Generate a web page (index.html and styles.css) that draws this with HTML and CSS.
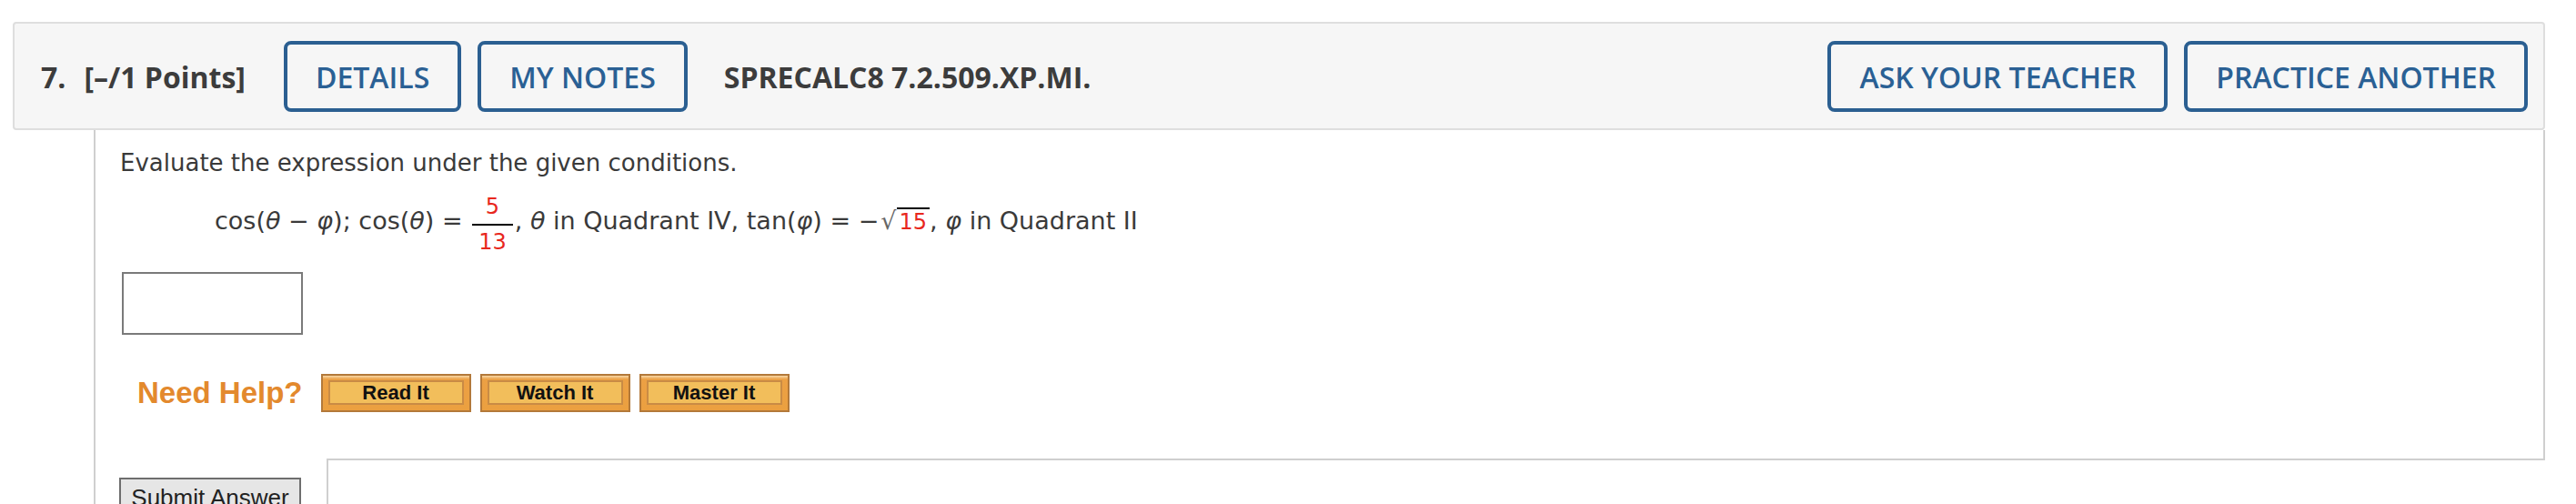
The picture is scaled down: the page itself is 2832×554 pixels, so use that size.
FILE: index.html
```html
<!doctype html>
<html lang="en">
	<head>
		<meta charset="UTF-8" />
		<title>Question 7</title>
		<link rel="stylesheet" href="styles.css">
	</head>
	<body>
		<div class="qhead">
			<span class="qnum">7.</span>
			<span class="points">[&ndash;/1 Points]</span>
			<a class="btn first">DETAILS</a>
			<a class="btn">MY NOTES</a>
			<span class="qid">SPRECALC8 7.2.509.XP.MI.</span>
			<div class="actions">
				<a class="btn">ASK YOUR TEACHER</a>
				<a class="btn">PRACTICE ANOTHER</a>
			</div>
		</div>

		<div class="question">
			<div class="qbody">
				<p class="prompt">Evaluate the expression under the given conditions.</p>
				<p class="math">cos(<i>&theta;</i> &minus; <i>&#966;</i>); cos(<i>&theta;</i>) = <span class="frac"><span class="num">5</span><span class="den">13</span></span>, <i>&theta;</i> in Quadrant IV, tan(<i>&#966;</i>) = &minus;<span class="rad">&radic;</span><span class="root">15</span>, <i>&#966;</i> in Quadrant II</p>
				<div class="answer"></div>
				<div class="help">
					<span class="help-label">Need Help?</span>
					<a class="hbtn"><span>Read It</span></a>
					<a class="hbtn"><span>Watch It</span></a>
					<a class="hbtn"><span>Master It</span></a>
				</div>
			</div>
			<div class="qfoot">
				<div class="submit-cell">
					<button class="submit">Submit Answer</button>
				</div>
				<div class="foot-box"></div>
			</div>
		</div>
	</body>
</html>
```

FILE: styles.css
```css
body {
	margin: 0;
	padding: 24px 34px 0 14px;
	background: #fff;
	color: #3a3a3a;
	overflow: hidden;
}

/* header bar */
.qhead {
	display: flex;
	align-items: center;
	background: #f6f6f6;
	border: 2px solid #dedede;
	border-radius: 4px;
	padding: 19px 17px 18px 29px;
	font-family: "Open Sans", sans-serif;
	color: #3c3c3c;
}
.qnum {
	font-weight: 700;
	font-size: 32px;
	margin-right: 20px;
}
.points {
	font-weight: 700;
	font-size: 32px;
	margin-right: 42px;
}
.btn {
	display: flex;
	align-items: center;
	box-sizing: border-box;
	height: 78px;
	padding: 0 31px;
	border: 4px solid #2b5f91;
	border-radius: 8px;
	color: #2a6094;
	font-size: 32px;
	font-weight: 600;
	margin-right: 18px;
}
.qid {
	font-weight: 700;
	font-size: 32px;
	margin-left: 22px;
}
.actions {
	display: flex;
	margin-left: auto;
}
.actions .btn:last-child {
	margin-right: 0;
}

/* question body */
.question {
	margin-left: 89px;
	border-left: 2px solid #cfcfcf;
}
.qbody {
	border-right: 2px solid #cfcfcf;
	padding: 20px 0 51px 27px;
	font-family: "DejaVu Sans", Verdana, sans-serif;
}
.prompt {
	margin: 0;
	font-size: 26px;
	line-height: 32px;
}
.math {
	margin: 18px 0 0 104px;
	font-size: 27px;
	line-height: 40px;
}
.frac {
	display: inline-block;
	vertical-align: -22px;
	font-size: 24px;
	color: #e8271d;
	margin: 0 2px;
}
.num {
	display: block;
	line-height: 28px;
	padding: 0 7px 5px;
	text-align: center;
	border-bottom: 2px solid #000;
}
.den {
	display: block;
	line-height: 28px;
	padding: 4px 7px 0;
	text-align: center;
}
.rad {
	color: #666;
	margin-left: 2px;
}
.root {
	color: #e8271d;
	font-size: 24px;
	border-top: 2px solid #000;
	padding: 0 3px;
}

.answer {
	width: 199px;
	height: 69px;
	box-sizing: border-box;
	border: 2px solid #7a7a7a;
	margin: 19px 0 0 2px;
}

.help {
	display: flex;
	align-items: center;
	margin: 43px 0 0 19px;
}
.help-label {
	font-family: "Liberation Sans", Arial, sans-serif;
	font-weight: 700;
	font-size: 33px;
	color: #e3892d;
	margin-right: 20px;
}
.hbtn {
	display: flex;
	box-sizing: border-box;
	width: 165px;
	height: 42px;
	padding: 5px 6px 6px 6px;
	margin-right: 10px;
	border: 2px solid #b3793a;
	background: linear-gradient(#f7d7a6 0, #eca044 4px, #eba040 100%);
}
.hbtn span {
	flex: 1;
	display: flex;
	align-items: center;
	justify-content: center;
	border: 2px solid #c98b45;
	background: #f2be5b;
	font-family: "Liberation Sans", Arial, sans-serif;
	font-weight: 700;
	font-size: 22px;
	color: #111;
}

/* footer row */
.qfoot {
	display: flex;
}
.submit-cell {
	width: 254px;
	padding: 21px 0 0 26px;
	box-sizing: border-box;
}
.submit {
	width: 200px;
	height: 44px;
	padding: 0;
	border: 2px solid #6e6e6e;
	background: #e6e6e6;
	font-family: "Liberation Sans", Arial, sans-serif;
	font-size: 26px;
	color: #222;
}
.foot-box {
	flex: 1;
	height: 60px;
	border-top: 2px solid #cfcfcf;
	border-left: 2px solid #cfcfcf;
}
```
